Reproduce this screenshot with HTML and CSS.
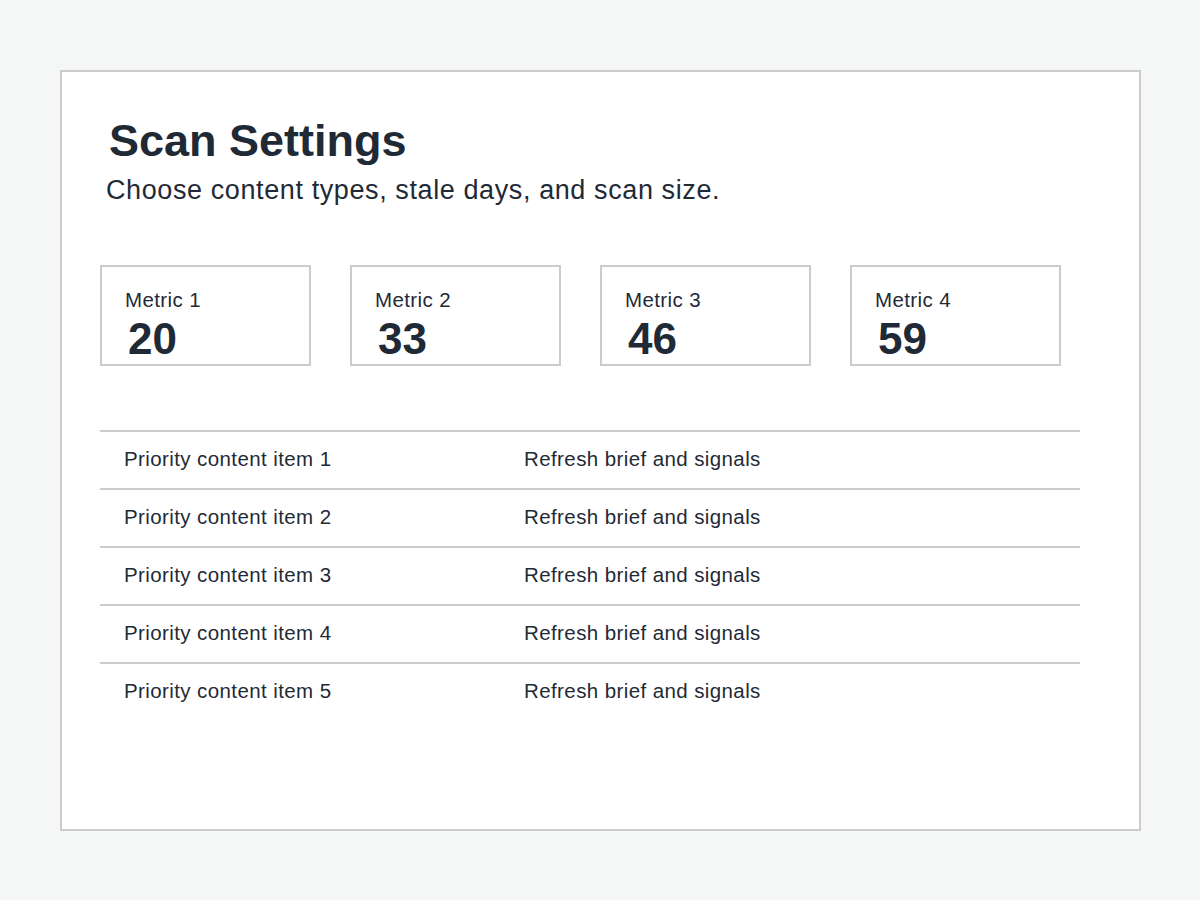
FILE: index.html
```html
<!DOCTYPE html>
<html lang="en">
<head>
<meta charset="utf-8">
<title>Scan Settings</title>
<link rel="stylesheet" href="styles.css">
</head>
<body>
<main class="card">
  <header class="header">
    <h1 class="title">Scan Settings</h1>
    <p class="subtitle">Choose content types, stale days, and scan size.</p>
  </header>
  <section class="metrics">
    <div class="metric"><div class="metric-label">Metric 1</div><div class="metric-value">20</div></div>
    <div class="metric"><div class="metric-label">Metric 2</div><div class="metric-value">33</div></div>
    <div class="metric"><div class="metric-label">Metric 3</div><div class="metric-value">46</div></div>
    <div class="metric"><div class="metric-label">Metric 4</div><div class="metric-value">59</div></div>
  </section>
  <section class="table">
    <div class="row"><span class="cell-name">Priority content item 1</span><span class="cell-action">Refresh brief and signals</span></div>
    <div class="row"><span class="cell-name">Priority content item 2</span><span class="cell-action">Refresh brief and signals</span></div>
    <div class="row"><span class="cell-name">Priority content item 3</span><span class="cell-action">Refresh brief and signals</span></div>
    <div class="row"><span class="cell-name">Priority content item 4</span><span class="cell-action">Refresh brief and signals</span></div>
    <div class="row"><span class="cell-name">Priority content item 5</span><span class="cell-action">Refresh brief and signals</span></div>
  </section>
</main>
</body>
</html>
```
FILE: styles.css
```css
* { box-sizing: border-box; }
html, body { margin: 0; padding: 0; }
body {
  background: #f5f6f6;
  font-family: "Liberation Sans", Arial, sans-serif;
  color: #1f2a36;
  padding: 70px 59px 69px 60px;
}
.card {
  background: #ffffff;
  border: 2px solid #cccccc;
  height: 761px;
  padding: 39px 59px 0 38px;
}
.header { padding-left: 6px; }
.title {
  margin: 0;
  font-size: 45px;
  font-weight: 700;
  line-height: 60px;
  padding-left: 3px;
}
.subtitle {
  margin: 0;
  font-size: 27px;
  line-height: 38px;
  letter-spacing: 0.6px;
}
.metrics {
  display: flex;
  gap: 39px;
  margin-top: 56px;
}
.metric {
  width: 211px;
  height: 101px;
  border: 2px solid #cccccc;
  padding: 21px 0 0 23px;
}
.metric-label {
  font-size: 20.5px;
  line-height: 24px;
  letter-spacing: 0.4px;
}
.metric-value {
  margin-top: 3px;
  font-size: 44px;
  font-weight: 700;
  line-height: 48px;
  padding-left: 3px;
}
.table {
  margin-top: 64px;
  width: 980px;
}
.row {
  display: flex;
  height: 58px;
  border-top: 2px solid #cccccc;
  padding: 15px 0 0 24px;
  font-size: 20.5px;
  line-height: 24px;
  letter-spacing: 0.4px;
}
.cell-name { width: 400px; }
```
